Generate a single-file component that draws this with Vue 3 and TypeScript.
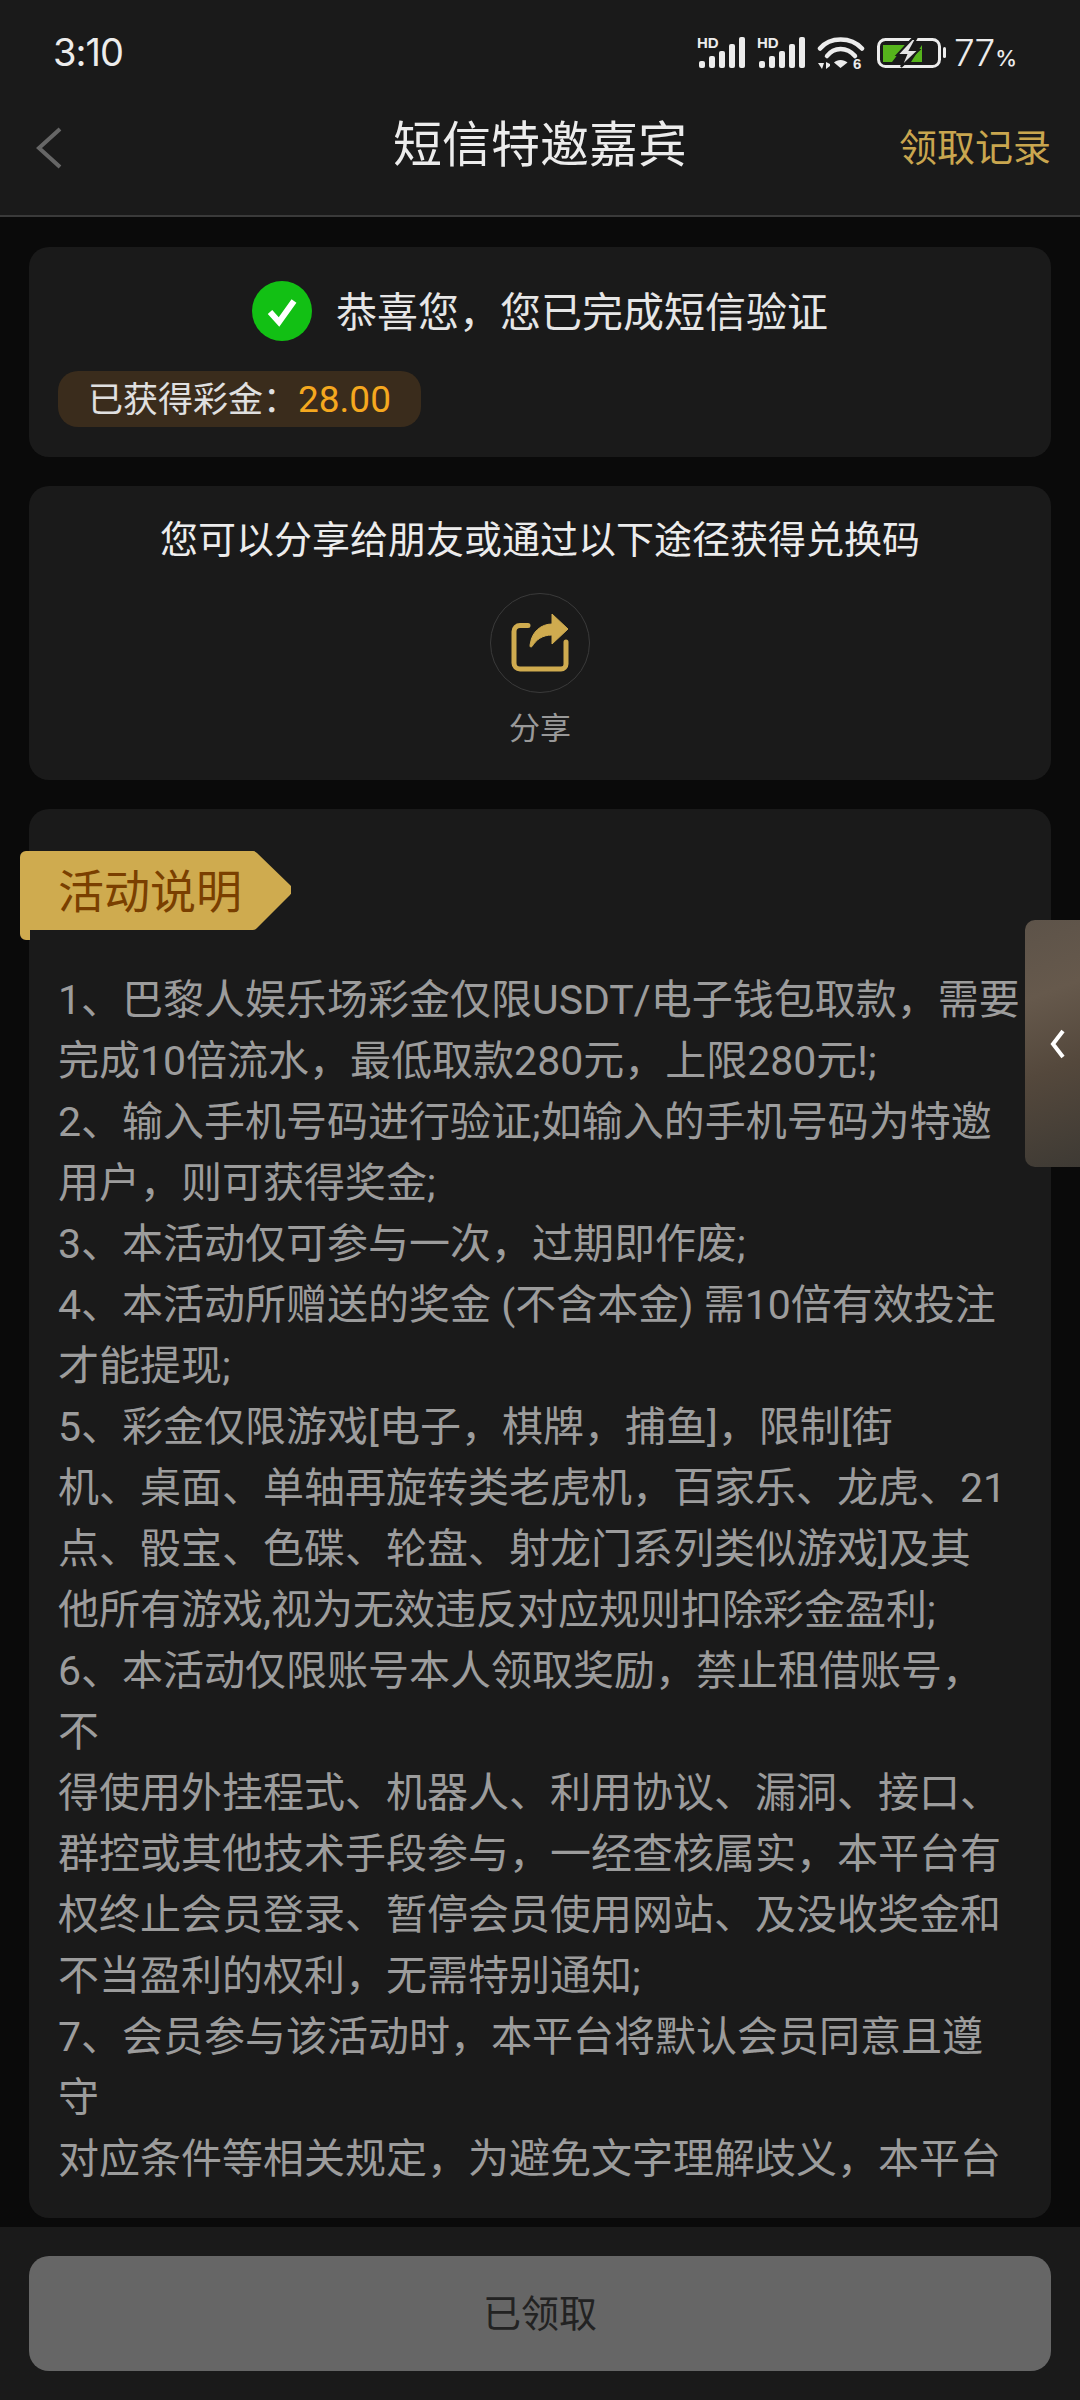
<template>
  <div class="page">
    <div class="status-bar">
      <span class="time">3:10</span>
      <div class="status-icons">
        <svg v-for="n in 2" :key="n" class="signal" viewBox="0 -6 48 40" width="48" height="40">
          <text x="0" y="12" class="hd">HD</text>
          <rect v-for="b in bars" :key="b.x" :x="b.x" :y="32 - b.h" width="6" :height="b.h" rx="2" fill="#ececec" />
        </svg>
        <svg class="wifi" viewBox="0 0 48 40" width="48" height="40">
          <path d="M3 12.500C13 0.500 34 0.500 45 12.500" fill="none" stroke="#ececec" stroke-width="4.500" stroke-linecap="round" />
          <path d="M10 20C17 10.500 30 10.500 38 20" fill="none" stroke="#ececec" stroke-width="4.500" stroke-linecap="round" />
          <path d="M17 26.500C20 23 27 23 30.500 26.500L23.500 32Z" fill="#ececec" />
          <path d="M1 27h6l-2 6zM9 33v-7l4 2v2z" fill="#ececec" />
          <text x="36" y="33" class="six">6</text>
        </svg>
        <svg class="battery" viewBox="0 0 70 30" width="70" height="30">
          <rect x="1.500" y="1.500" width="61" height="27" rx="7" fill="none" stroke="#ececec" stroke-width="3" />
          <rect x="66" y="9" width="3" height="11" rx="1.500" fill="#ececec" />
          <path d="M6 7H28L15 24H6ZM34 24L45 7V24Z" fill="#56b41c" />
          <path d="M35 1L20 17H29L24 29L42 12H33L39 1Z" fill="#e4e4e4" stroke="#1a1a1a" stroke-width="2" />
        </svg>
        <span class="percent">77<small>%</small></span>
      </div>
    </div>

    <header class="nav">
      <svg class="back" viewBox="0 0 28 42" width="28" height="42">
        <path d="M25 2L4 21L25 40" fill="none" stroke="#666" stroke-width="4" />
      </svg>
      <h1 class="nav-title">短信特邀嘉宾</h1>
      <span class="nav-link">领取记录</span>
    </header>

    <main class="content">
      <section class="card result-card">
        <div class="result-row">
          <svg class="check" viewBox="0 0 60 60" width="60" height="60">
            <circle cx="30" cy="30" r="30" fill="#12c014" />
            <path d="M18 31L27 41L42 20" fill="none" stroke="#fff" stroke-width="6" />
          </svg>
          <span class="result-text">恭喜您，您已完成短信验证</span>
        </div>
        <div class="reward"><span class="reward-text">已获得彩金：<span class="amount">28.00</span></span></div>
      </section>

      <section class="card share-card">
        <p class="share-text">您可以分享给朋友或通过以下途径获得兑换码</p>
        <div class="share-circle">
          <svg viewBox="0 0 62 62" width="62" height="62">
            <path d="M19 13.500H11a6 6 0 0 0-6 6V51a6 6 0 0 0 6 6H52a5 5 0 0 0 5-5V30" fill="none" stroke="#cfab4f" stroke-width="5" stroke-linecap="round" />
            <path d="M43 2L59 17L43 32V23C33 23 27 28 23 34.500C21 36 20.500 34 21.500 31C23 20 32 12 43 12Z" fill="#cfab4f" stroke="#cfab4f" stroke-linejoin="round" />
          </svg>
        </div>
        <span class="share-label">分享</span>
      </section>

      <section class="card rules-card">
        <div class="rules-tag">
          <svg class="tag-bg" viewBox="0 0 271 90" width="271" height="90">
            <path d="M6 0H232a6 6 0 0 1 5 2L270 34a7 7 0 0 1 0 10L237 77a6 6 0 0 1-5 2H10V89H6a6 6 0 0 1-6-6V6a6 6 0 0 1 6-6Z" fill="#cfab4f" />
          </svg>
          <span class="tag-text">活动说明</span>
        </div>
        <div class="rules-text">
          <div v-for="line in ruleLines" :key="line" class="rule-line">{{ line }}</div>
        </div>
      </section>
    </main>

    <footer class="footer">
      <button class="claim-button" disabled>已领取</button>
    </footer>

    <div class="side-tab">
      <svg viewBox="0 0 16 30" width="16" height="30">
        <path d="M13 2L3 15L13 28" fill="none" stroke="#fff" stroke-width="4" />
      </svg>
    </div>
  </div>
</template>

<script setup lang="ts">
// 信号格高度
const bars = [
  { x: 2, h: 7 },
  { x: 12, h: 12 },
  { x: 22, h: 17 },
  { x: 32, h: 24 },
  { x: 42, h: 31 }
];

const ruleLines: string[] = [
  '1、巴黎人娱乐场彩金仅限USDT/电子钱包取款，需要',
  '完成10倍流水，最低取款280元，上限280元!;',
  '2、输入手机号码进行验证;如输入的手机号码为特邀',
  '用户，则可获得奖金;',
  '3、本活动仅可参与一次，过期即作废;',
  '4、本活动所赠送的奖金 (不含本金) 需10倍有效投注',
  '才能提现;',
  '5、彩金仅限游戏[电子，棋牌，捕鱼]，限制[街',
  '机、桌面、单轴再旋转类老虎机，百家乐、龙虎、21',
  '点、骰宝、色碟、轮盘、射龙门系列类似游戏]及其',
  '他所有游戏,视为无效违反对应规则扣除彩金盈利;',
  '6、本活动仅限账号本人领取奖励，禁止租借账号，',
  '不',
  '得使用外挂程式、机器人、利用协议、漏洞、接口、',
  '群控或其他技术手段参与，一经查核属实，本平台有',
  '权终止会员登录、暂停会员使用网站、及没收奖金和',
  '不当盈利的权利，无需特别通知;',
  '7、会员参与该活动时，本平台将默认会员同意且遵',
  '守',
  '对应条件等相关规定，为避免文字理解歧义，本平台'
];
</script>

<style scoped>
.page {
  position: relative;
  display: flex;
  flex-direction: column;
  width: 1080px;
  height: 2400px;
  overflow: hidden;
  background: #0a0a0a;
  font-family: Roboto, "Noto Sans CJK SC", sans-serif;
}

.status-bar {
  display: flex;
  align-items: center;
  justify-content: space-between;
  height: 100px;
  padding: 0 64px 0 53px;
  box-sizing: border-box;
  background: #1a1a1a;
  color: #ececec;
}

.time {
  font-family: Inter, sans-serif;
  font-size: 38px;
  font-weight: 400;
  letter-spacing: -1px;
  margin-top: 4px;
}

.status-icons {
  display: flex;
  align-items: center;
  gap: 12px;
  margin-top: 5px;
}

.signal {
  margin-top: -6px;
}

.wifi {
  margin-top: 6px;
}

.hd,
.six {
  font-family: "Liberation Sans", sans-serif;
  font-size: 15px;
  font-weight: 700;
  fill: #ececec;
}

.percent {
  font-family: Inter, sans-serif;
  font-size: 37px;
  font-weight: 300;
  letter-spacing: -1px;
  line-height: 1;
  margin-left: -5px;
}

.percent small {
  font-size: 22px;
  font-weight: 500;
  margin-left: 1px;
}

.nav {
  display: flex;
  align-items: center;
  justify-content: center;
  position: relative;
  height: 117px;
  box-sizing: border-box;
  padding: 0 29px 34px;
  background: #1a1a1a;
  border-bottom: 2px solid #3a3a3a;
}

.back {
  position: absolute;
  left: 35px;
  top: 27px;
}

.nav-title {
  margin: 0;
  font-size: 49px;
  font-weight: 400;
  color: #ececec;
}

.nav-link {
  position: absolute;
  right: 29px;
  top: 17px;
  font-size: 38px;
  color: #c9a64f;
}

.content {
  flex: 1;
  min-height: 0;
  display: flex;
  flex-direction: column;
  gap: 29px;
  padding: 30px 29px 9px;
}

.card {
  background: #1a1a1a;
  border-radius: 20px;
}

.result-card {
  padding: 34px 29px 30px;
}

.result-row {
  display: flex;
  align-items: center;
  justify-content: center;
  gap: 24px;
  height: 60px;
  margin-bottom: 30px;
  font-size: 41px;
  color: #e6e6e6;
}

.result-text {
  margin-top: -4px;
}

.reward {
  display: inline-flex;
  align-items: center;
  height: 56px;
  padding: 0 30px;
  border-radius: 20px;
  background: #3a2c1c;
  font-size: 35px;
  color: #e0e0e0;
}

.reward-text {
  margin-top: -6px;
}

.amount {
  font-size: 37px;
  color: #f5a81f;
}

.share-card {
  display: flex;
  flex-direction: column;
  align-items: center;
  height: 294px;
  box-sizing: border-box;
  padding-top: 27px;
}

.share-text {
  margin: 0 0 26px;
  font-size: 38px;
  line-height: 54px;
  color: #ececec;
}

.share-circle {
  display: flex;
  align-items: center;
  justify-content: center;
  width: 100px;
  height: 100px;
  box-sizing: border-box;
  border: 1px solid #3a3a3a;
  border-radius: 50%;
}

.share-label {
  margin-top: 14px;
  font-size: 31px;
  line-height: 44px;
  color: #999;
}

.rules-card {
  flex: 1;
  min-height: 0;
  padding: 42px 0 0;
}

.rules-tag {
  position: relative;
  display: flex;
  align-items: center;
  width: 271px;
  height: 79px;
  margin-left: -9px;
}

.tag-bg {
  position: absolute;
  left: 0;
  top: 0;
}

.tag-text {
  position: relative;
  margin: -5px 0 0 38px;
  font-size: 46px;
  color: #7a3f00;
}

.rules-text {
  margin-top: 40px;
  padding: 0 20px 0 29px;
}

.rule-line {
  height: 61px;
  line-height: 61px;
  font-size: 41px;
  white-space: nowrap;
  color: #9c9c9c;
}

.footer {
  height: 173px;
  box-sizing: border-box;
  padding: 29px 29px 0;
  background: #1a1a1a;
}

.claim-button {
  display: block;
  width: 100%;
  height: 115px;
  padding: 0 0 7px;
  border: none;
  border-radius: 20px;
  background: #666;
  color: #222;
  font-family: inherit;
  font-size: 38px;
}

.side-tab {
  position: absolute;
  right: 0;
  top: 920px;
  display: flex;
  align-items: center;
  justify-content: center;
  width: 55px;
  height: 247px;
  box-sizing: border-box;
  padding-left: 10px;
  border-radius: 10px 0 0 10px;
  background: linear-gradient(160deg, #5d5349 0%, #66594c 30%, #54483c 60%, #3e3a34 100%);
}
</style>

<style>
html, body {
  background: #0a0a0a;
}
</style>
